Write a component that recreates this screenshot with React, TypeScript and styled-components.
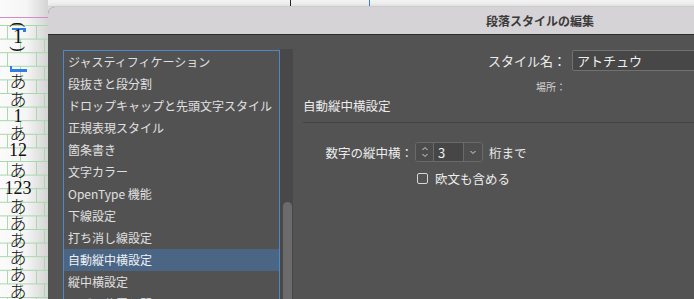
import React from 'react'
import styled, { createGlobalStyle } from 'styled-components'

const GlobalStyle = createGlobalStyle`
	html, body {
		margin: 0;
		padding: 0;
		background: #efefef;
	}
	body {
		font-family: 'Noto Sans CJK JP', 'Noto Sans', sans-serif;
	}
`

const Screen = styled.div`
	width: 694px;
	height: 299px;
	overflow: hidden;
	display: grid;
	grid-template-columns: 48px 984px;
	grid-template-rows: 7px 292px;
	background: #efefef;
`

/* ---- document canvas on the left ---- */

const Canvas = styled.div`
	grid-column: 1;
	grid-row: 1 / 3;
	position: relative;
	background: linear-gradient(to right, #fbfbfb 0, #f5f5f5 55%, #d4d4d4 100%);
	overflow: hidden;
`

const GridLayer = styled.svg`
	position: absolute;
	left: 0;
	top: 0;
`

const TextColumn = styled.div`
	position: relative;
	width: 36px;
	display: flex;
	flex-direction: column;
	align-items: center;
	color: #111;
`

const Glyph = styled.span<{ $gap: number; $num?: boolean; $rot?: boolean; $size?: number }>`
	display: flex;
	align-items: center;
	justify-content: center;
	height: 16px;
	line-height: 16px;
	margin-top: ${p => p.$gap}px;
	font-family: ${p =>
		p.$num || p.$rot
			? "'Liberation Serif', serif"
			: "'Noto Sans CJK JP', sans-serif"};
	font-size: ${p => p.$size ?? (p.$num ? 18 : 17)}px;
	font-weight: ${p => (p.$num || p.$rot ? 400 : 300)};
	transform: ${p => (p.$rot ? 'rotate(90deg)' : 'none')};
	white-space: nowrap;
`

/* ---- top strip ---- */

const TopStrip = styled.div`
	grid-column: 2;
	grid-row: 1;
	display: flex;
	background: #f2f2f2;
	border-bottom: 1px solid #dedede;
	box-sizing: border-box;
`

const Guide = styled.div<{ $offset: number; $color: string }>`
	width: 1px;
	margin-left: ${p => p.$offset}px;
	background: ${p => p.$color};
`

/* ---- dialog ---- */

const Dialog = styled.div`
	grid-column: 2;
	grid-row: 2;
	display: flex;
	flex-direction: column;
	background: #535353;
	border-top-left-radius: 7px;
	box-shadow: -3px 0 6px rgba(0, 0, 0, 0.18);
	overflow: hidden;
`

const TitleBar = styled.div`
	height: 27px;
	flex: none;
	display: flex;
	align-items: center;
	justify-content: center;
	background: #d6d3d6;
	border-bottom: 1px solid #2c2c2c;
	color: #3a3a3a;
	font-size: 12px;
	font-weight: 700;
`

const Body = styled.div`
	flex: 1;
	display: flex;
	padding: 15px 0 0 15px;
	min-height: 0;
`

const CategoryList = styled.ul`
	width: 215px;
	margin: 0;
	padding: 0;
	list-style: none;
	border: 1px solid #4f88c8;
	border-bottom: 0;
	background: #525252;
	overflow: hidden;
`

const Category = styled.li<{ $selected?: boolean }>`
	height: 22px;
	line-height: 22px;
	padding-left: 4px;
	font-size: 12px;
	color: ${p => (p.$selected ? '#eef1f5' : '#e0e0e0')};
	background: ${p => (p.$selected ? '#4b6585' : 'transparent')};
	white-space: nowrap;
`

const ScrollTrack = styled.div`
	width: 13px;
	flex: none;
	margin-top: -1px;
	background: #484848;
	display: flex;
	flex-direction: column;
	align-items: center;
`

const ScrollThumb = styled.div`
	width: 9px;
	flex: 1;
	margin-top: 153px;
	margin-left: 1px;
	border-radius: 5px 5px 0 0;
	background: #6b6b6b;
`

const Panel = styled.div`
	flex: 1;
	padding-left: 10px;
	display: flex;
	flex-direction: column;
	color: #ececec;
`

const FieldRow = styled.div<{ $height: number; $top: number }>`
	display: flex;
	align-items: center;
	height: ${p => p.$height}px;
	margin-top: ${p => p.$top}px;
`

const RightLabel = styled.span<{ $small?: boolean }>`
	width: 263px;
	text-align: right;
	font-size: ${p => (p.$small ? 10 : 13)}px;
	color: ${p => (p.$small ? '#d2d2d2' : '#ececec')};
	white-space: nowrap;
`

const NameInput = styled.div`
	margin-left: 6px;
	width: 340px;
	height: 21px;
	box-sizing: border-box;
	padding-left: 4px;
	display: flex;
	align-items: center;
	border: 1px solid #717171;
	border-radius: 2px;
	background: #474747;
	font-size: 13px;
	color: #efefef;
`

const SectionTitle = styled.div`
	height: 18px;
	line-height: 18px;
	margin-top: 4px;
	font-size: 12.5px;
	color: #ececec;
`

const Rule = styled.div`
	height: 1px;
	margin-top: 7px;
	background: #434343;
`

const OptionRow = styled.div<{ $height: number; $top: number }>`
	display: flex;
	align-items: center;
	height: ${p => p.$height}px;
	margin-top: ${p => p.$top}px;
`

const OptionLabel = styled.span`
	width: 110px;
	margin-right: 2px;
	text-align: right;
	font-size: 12.5px;
	white-space: nowrap;
`

const Spinner = styled.div`
	display: flex;
	width: 68px;
	height: 20px;
	box-sizing: border-box;
	border: 1px solid #6a6a6a;
	border-radius: 3px;
	overflow: hidden;
`

const SpinButtons = styled.div`
	width: 17px;
	display: flex;
	align-items: center;
	justify-content: center;
	background: #4c4c4c;
	border-right: 1px solid #6a6a6a;
`

const SpinValue = styled.div`
	width: 30px;
	padding-left: 4px;
	box-sizing: border-box;
	display: flex;
	align-items: center;
	background: #464646;
	border-right: 1px solid #6a6a6a;
	font-size: 13px;
	color: #f0f0f0;
`

const SpinDrop = styled.div`
	flex: 1;
	display: flex;
	align-items: center;
	justify-content: center;
	background: #4f4f4f;
`

const Suffix = styled.span`
	margin-left: 6px;
	font-size: 12.5px;
`

const CheckBox = styled.span`
	width: 11px;
	height: 11px;
	margin-left: 114px;
	box-sizing: border-box;
	border: 1px solid #d6d6d6;
	border-radius: 2px;
`

const CheckLabel = styled.span`
	margin-left: 7px;
	font-size: 12.5px;
`

const categories = [
	'ジャスティフィケーション',
	'段抜きと段分割',
	'ドロップキャップと先頭文字スタイル',
	'正規表現スタイル',
	'箇条書き',
	'文字カラー',
	'OpenType 機能',
	'下線設定',
	'打ち消し線設定',
	'自動縦中横設定',
	'縦中横設定',
	'ルビの位置と間隔',
]

// vertical text down the page, with the gap before each glyph
const columnText: { t: string; gap: number; num?: boolean; rot?: boolean; size?: number }[] = [
	{ t: '(', gap: 17, rot: true, size: 16 },
	{ t: '1', gap: -5, num: true, size: 20 },
	{ t: ')', gap: -3, rot: true, size: 16 },
	{ t: 'あ', gap: 16 },
	{ t: 'あ', gap: 2 },
	{ t: '1', gap: 1, num: true },
	{ t: 'あ', gap: 1 },
	{ t: '12', gap: 1, num: true },
	{ t: 'あ', gap: 4 },
	{ t: '123', gap: 2, num: true },
	{ t: 'あ', gap: 2 },
	{ t: 'あ', gap: 1 },
	{ t: 'あ', gap: 1 },
	{ t: 'あ', gap: 1 },
	{ t: 'あ', gap: 1 },
	{ t: 'あ', gap: 1 },
]

const FrameGrid = () => {
	const rows = Array.from({ length: 21 }, (_, i) => 25.5 + i * 13.6)
	return (
		<GridLayer width={48} height={299}>
			<line x1={0} y1={17.5} x2={48} y2={17.5} stroke="#d48cc6" />
			{rows.map((y, i) => (
				<line key={i} x1={0} y1={y} x2={48} y2={y} stroke="#a8d8ab" />
			))}
			{rows.map((y, i) => (
				<g key={'v' + i} stroke="#a8d8ab">
					<line x1={i % 2 ? 20.5 : 7.5} y1={y} x2={i % 2 ? 20.5 : 7.5} y2={y + 13.6} />
					<line x1={i % 2 ? 44.5 : 36.5} y1={y} x2={i % 2 ? 44.5 : 36.5} y2={y + 13.6} />
				</g>
			))}
			<path d="M12 28h14v4h-3v-2h-11z" fill="#2f7de1" />
			<path d="M10 66h2v3h15v3h-17z" fill="#2f7de1" />
		</GridLayer>
	)
}

const SpinArrows = () => (
	<svg width="8" height="14" viewBox="0 0 8 14" fill="none" stroke="#d4d4d4" strokeWidth="1">
		<path d="M1.5 5L4 2.5L6.5 5" />
		<path d="M1.5 9L4 11.5L6.5 9" />
	</svg>
)

const DropChevron = () => (
	<svg width="8" height="5" viewBox="0 0 8 5" fill="none" stroke="#d4d4d4" strokeWidth="1">
		<path d="M1.5 1L4 3.5L6.5 1" />
	</svg>
)

export default function App() {
	return (
		<>
			<GlobalStyle />
			<Screen>
				<Canvas>
					<FrameGrid />
					<TextColumn>
						{columnText.map((g, k) => (
							<Glyph key={k} $gap={g.gap} $num={g.num} $rot={g.rot} $size={g.size}>
								{g.t}
							</Glyph>
						))}
					</TextColumn>
				</Canvas>
				<TopStrip>
					<Guide $offset={242} $color="#262626" />
					<Guide $offset={78} $color="#3b7fd8" />
				</TopStrip>
				<Dialog>
					<TitleBar>段落スタイルの編集</TitleBar>
					<Body>
						<CategoryList>
							{categories.map((c, k) => (
								<Category key={k} $selected={c === '自動縦中横設定'}>
									{c}
								</Category>
							))}
						</CategoryList>
						<ScrollTrack>
							<ScrollThumb />
						</ScrollTrack>
						<Panel>
							<FieldRow $height={21} $top={0}>
								<RightLabel>スタイル名：</RightLabel>
								<NameInput>アトチュウ</NameInput>
							</FieldRow>
							<FieldRow $height={14} $top={8}>
								<RightLabel $small>場所：</RightLabel>
							</FieldRow>
							<SectionTitle>自動縦中横設定</SectionTitle>
							<Rule />
							<OptionRow $height={20} $top={19}>
								<OptionLabel>数字の縦中横：</OptionLabel>
								<Spinner>
									<SpinButtons>
										<SpinArrows />
									</SpinButtons>
									<SpinValue>3</SpinValue>
									<SpinDrop>
										<DropChevron />
									</SpinDrop>
								</Spinner>
								<Suffix>桁まで</Suffix>
							</OptionRow>
							<OptionRow $height={16} $top={8}>
								<CheckBox />
								<CheckLabel>欧文も含める</CheckLabel>
							</OptionRow>
						</Panel>
					</Body>
				</Dialog>
			</Screen>
		</>
	)
}
